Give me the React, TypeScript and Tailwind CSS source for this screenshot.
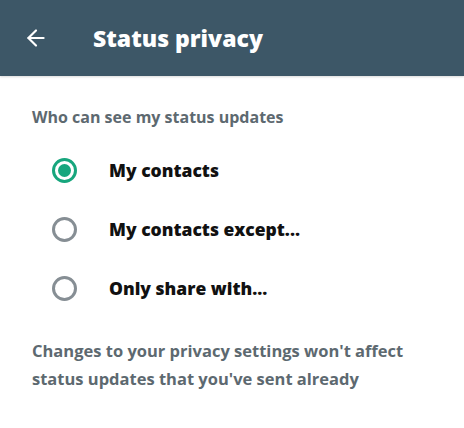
import { ArrowLeft } from "lucide-react";

const options = [
  { label: "My contacts", selected: true },
  { label: "My contacts except...", selected: false },
  { label: "Only share with...", selected: false },
];

function Radio({ selected }: { selected: boolean }) {
  if (selected) {
    return (
      <span className="flex h-[25px] w-[25px] items-center justify-center rounded-full border-[3px] border-[#17a67d]">
        <span className="h-[13px] w-[13px] rounded-full bg-[#17a67d]" />
      </span>
    );
  }
  return <span className="block h-[25px] w-[25px] rounded-full border-[3px] border-[#868e94]" />;
}

export default function App() {
  return (
    <div className="h-[428px] w-[464px] bg-white font-['Open_Sans',sans-serif]">
      <header className="flex h-[76px] items-center bg-[#3d5767] pl-[23px] shadow-[0_1px_2px_rgba(0,0,0,0.15)]">
        <ArrowLeft className="h-[26px] w-[26px] text-white" strokeWidth={2} />
        <h1 className="ml-[44px] text-[23px] font-extrabold text-white">Status privacy</h1>
      </header>

      <div className="px-[32px] pt-[30px]">
        <p className="text-[16px] font-bold leading-[22px] text-[#5d6970]">Who can see my status updates</p>
      </div>

      <div className="mt-[13px] flex flex-col">
        {options.map((o) => (
          <label key={o.label} className="flex h-[59px] items-center pl-[52px]">
            <Radio selected={o.selected} />
            <span className="ml-[32px] text-[17.5px] font-extrabold text-[#111]">{o.label}</span>
          </label>
        ))}
      </div>

      <p className="mt-[19px] px-[32px] text-[16.5px] font-bold leading-[28px] text-[#5d6970]">
        Changes to your privacy settings won't affect
        <br />
        status updates that you've sent already
      </p>
    </div>
  );
}
